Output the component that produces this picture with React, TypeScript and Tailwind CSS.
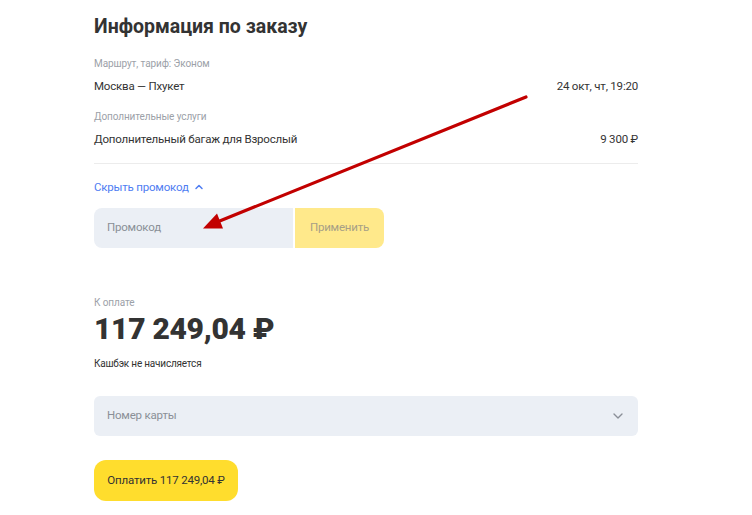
import { ChevronDown, ChevronUp } from 'lucide-react'

function Row({ left, right }: { left: string; right: string }) {
  return (
    <div className="mt-1 flex h-5 items-center justify-between text-[11.5px] leading-5 tracking-[-0.2px] text-[#333333]">
      <span>{left}</span>
      <span>{right}</span>
    </div>
  )
}

function Label({ children, className = '' }: { children: string; className?: string }) {
  return (
    <div className={'text-[10px] leading-4 tracking-[-0.1px] text-[#9ca1a8] ' + className}>{children}</div>
  )
}

export default function App() {
  return (
    <div
      className="relative h-[515px] w-[752px] overflow-hidden bg-white"
      style={{ fontFamily: 'Roboto, "Liberation Sans", sans-serif' }}
    >
      <div className="ml-[94px] w-[544px] pt-[13px]">
        <h1 className="text-[19.5px] font-bold leading-7 text-[#333333]">Информация по заказу</h1>

        <Label className="mt-[15px]">Маршрут, тариф: Эконом</Label>
        <Row left="Москва — Пхукет" right="24 окт, чт, 19:20" />

        <Label className="mt-[13px]">Дополнительные услуги</Label>
        <Row left="Дополнительный багаж для Взрослый" right="9 300 ₽" />

        <div className="mt-[14px] h-px bg-[#ececec]" />

        <button
          type="button"
          className="mt-[13px] flex h-5 items-center gap-1 text-[11.5px] leading-5 tracking-[-0.2px] text-[#4f7df2]"
        >
          Скрыть промокод
          <ChevronUp className="h-3 w-3" strokeWidth={3} />
        </button>

        <div className="mt-[11px] flex h-10 gap-[2px]">
          <div className="flex w-[199px] items-center rounded-l-lg bg-[#ebeff5] pl-[13px] text-[11.5px] tracking-[-0.2px] text-[#8a8f97]">
            Промокод
          </div>
          <div className="flex w-[89px] items-center justify-center rounded-r-lg bg-[#ffe98b] text-[11.5px] tracking-[-0.2px] text-[#a79f86]">
            Применить
          </div>
        </div>

        <Label className="mt-[47px] text-[#8c9199]">К оплате</Label>
        <div className="text-[30px] font-black leading-9 tracking-[-0.3px] text-[#333333]">117 249,04 ₽</div>
        <div className="mt-[9px] text-[10px] leading-4 tracking-[-0.2px] text-[#333333]">Кашбэк не начисляется</div>

        <div className="mt-6 flex h-10 items-center justify-between rounded-md bg-[#ebeff5] pl-[13px] pr-3 text-[11.5px] tracking-[-0.2px] text-[#8a8f97]">
          <span>Номер карты</span>
          <ChevronDown className="h-4 w-4 text-[#8a8f97]" strokeWidth={2} />
        </div>

        <button
          type="button"
          className="mt-6 flex h-[41px] w-[144px] items-center justify-center rounded-xl bg-[#ffdd2d] text-[11.5px] tracking-[-0.2px] text-[#333333]"
        >
          Оплатить 117 249,04 ₽
        </button>
      </div>

      <svg className="pointer-events-none absolute inset-0" width="752" height="515">
        <line x1="526" y1="97" x2="216" y2="222.5" stroke="#c20000" strokeWidth="3.2" strokeLinecap="round" />
        <polygon points="203,228.5 223,228.5 217,213.5" fill="#c20000" />
      </svg>
    </div>
  )
}
